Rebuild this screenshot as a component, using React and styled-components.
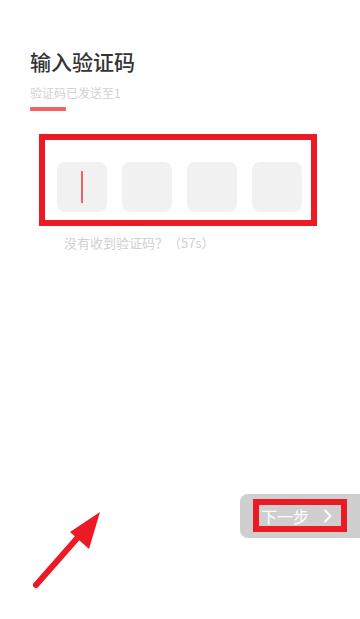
import styled, { createGlobalStyle } from 'styled-components'

const GlobalStyle = createGlobalStyle`
  html, body {
    margin: 0;
    padding: 0;
    background: #fff;
  }
  body {
    font-family: "Noto Sans CJK SC", "Noto Sans", sans-serif;
  }
`

const Page = styled.div`
  position: relative;
  display: flex;
  flex-direction: column;
  height: 619px;
  overflow: hidden;
  background: #fff;
`

const Header = styled.div`
  display: flex;
  flex-direction: column;
  padding: 47px 30px 0;
`

const Title = styled.h1`
  margin: 0;
  font-size: 21px;
  line-height: 28px;
  font-weight: 500;
  color: #333;
`

const Subtitle = styled.p`
  margin: 10px 0 0;
  font-size: 12px;
  line-height: 16px;
  color: #d2d2d2;
`

const Underline = styled.div`
  width: 36px;
  height: 4px;
  margin-top: 6px;
  border-radius: 1px;
  background: #f26262;
`

const CodeFrame = styled.div`
  display: flex;
  gap: 15px;
  width: 278px;
  box-sizing: border-box;
  margin: 23px 0 0 39px;
  padding: 22px 9px 8px 12px;
  border: 6px solid #ec1a24;
`

const CodeCell = styled.div`
  display: flex;
  align-items: center;
  justify-content: center;
  width: 50px;
  height: 50px;
  border-radius: 8px;
  background: #f1f1f1;
`

const Caret = styled.div`
  width: 2px;
  height: 32px;
  background: #f26262;
`

const Hint = styled.p`
  margin: 8px 0 0 64px;
  font-size: 13px;
  line-height: 18px;
  color: #d0d0d0;
`

const Footer = styled.div`
  display: flex;
  justify-content: flex-end;
  margin-top: auto;
  margin-bottom: 81px;
`

const NextButton = styled.div`
  display: flex;
  align-items: center;
  width: 120px;
  height: 44px;
  box-sizing: border-box;
  padding: 5px 13px 6px 13px;
  border-radius: 8px 0 0 8px;
  background: #cfcfcf;
`

const ButtonMark = styled.div`
  display: flex;
  align-items: center;
  gap: 14px;
  width: 94px;
  height: 33px;
  box-sizing: border-box;
  padding-left: 2px;
  border: 6px solid #ec1a24;
  color: #fff;
  font-size: 16px;
`

const Arrow = styled.svg`
  position: absolute;
  left: 30px;
  top: 505px;
  width: 80px;
  height: 90px;
`

export default function App() {
  return (
    <>
      <GlobalStyle />
      <Page>
        <Header>
          <Title>输入验证码</Title>
          <Subtitle>验证码已发送至1</Subtitle>
          <Underline />
        </Header>
        <CodeFrame>
          {[0, 1, 2, 3].map(i => (
            <CodeCell key={i}>{i === 0 && <Caret />}</CodeCell>
          ))}
        </CodeFrame>
        <Hint>没有收到验证码？（57s）</Hint>
        <Footer>
          <NextButton>
            <ButtonMark>
              <span>下一步</span>
              <svg width='10' height='14' viewBox='0 0 10 14'>
                <path d='M2 1.5 L7.5 7 L2 12.5' fill='none' stroke='#fff' strokeWidth='2' strokeLinecap='round' strokeLinejoin='round' />
              </svg>
            </ButtonMark>
          </NextButton>
        </Footer>
        <Arrow viewBox='0 0 80 90'>
          <line x1='6' y1='80' x2='50' y2='30' stroke='#ec1a24' strokeWidth='6' strokeLinecap='round' />
          <polygon points='70,7 40,27 59,44' fill='#ec1a24' />
        </Arrow>
      </Page>
    </>
  )
}
